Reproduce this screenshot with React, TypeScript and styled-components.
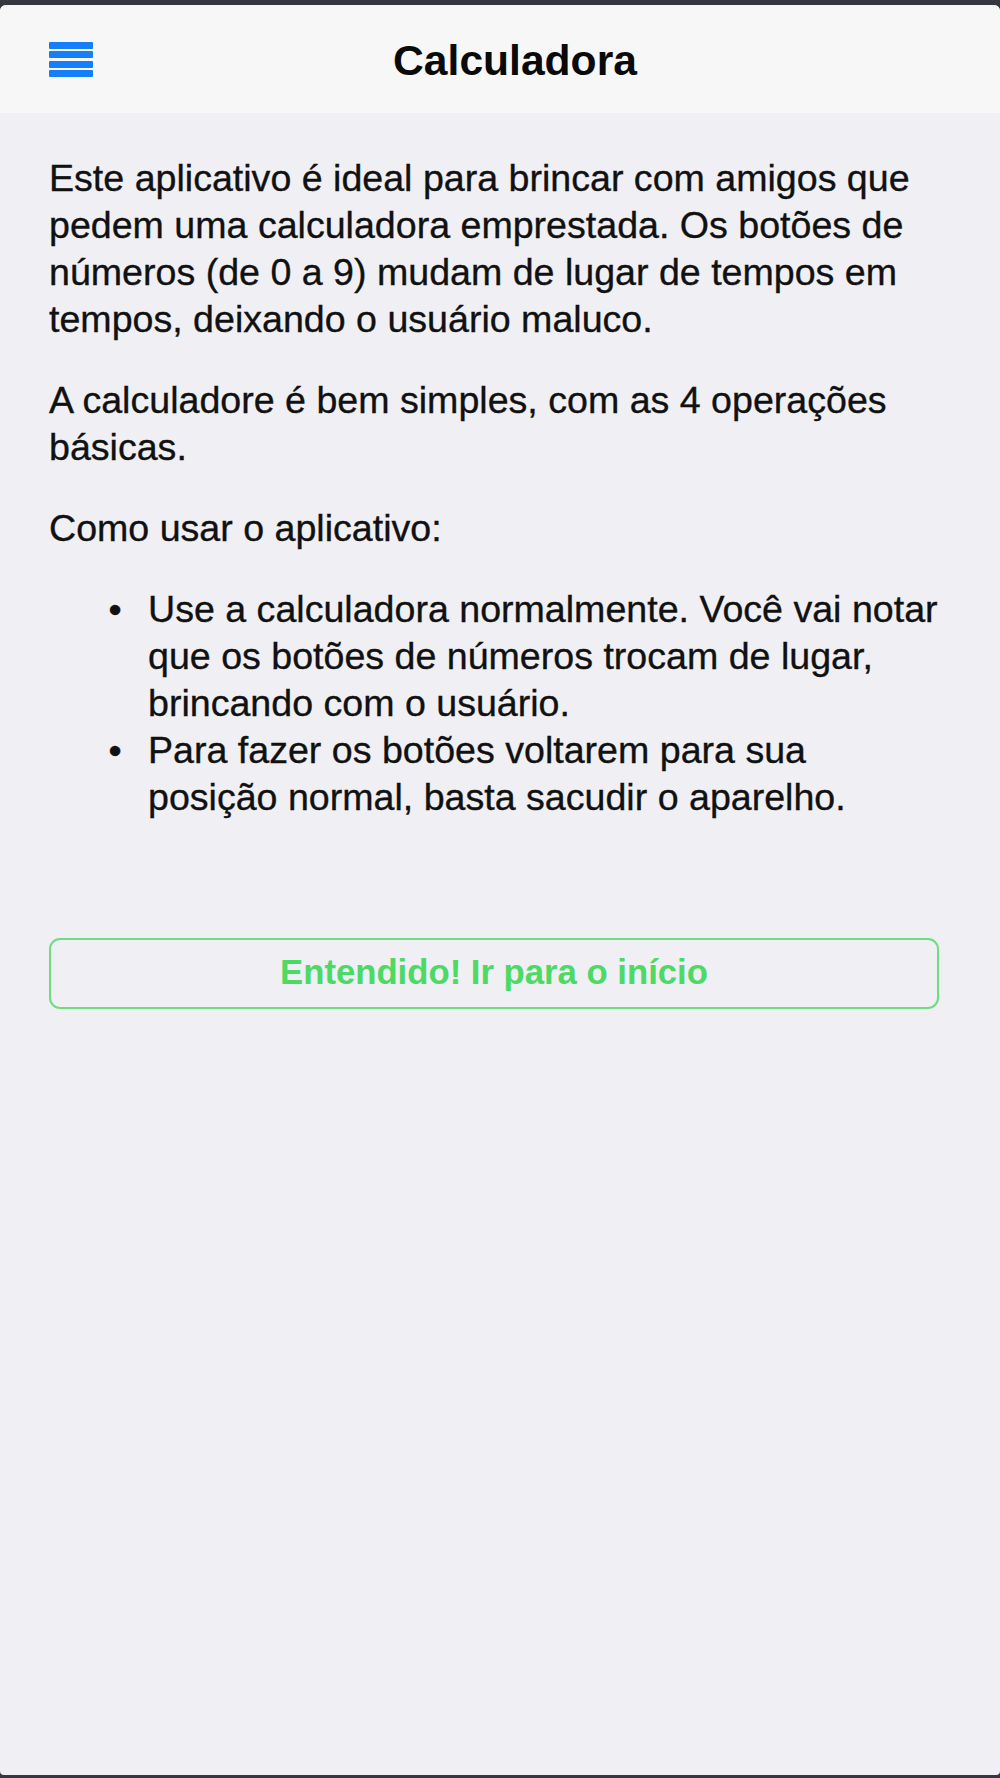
import React from "react";
import styled, { createGlobalStyle } from "styled-components";

const Global = createGlobalStyle`
  html, body { margin: 0; padding: 0; background: #33393e; }
  body { font-family: "Liberation Sans", Arial, sans-serif; }
  * { box-sizing: border-box; }
`;

const Frame = styled.div`
  width: 1000px;
  height: 1778px;
  padding: 5px 0 3px 0;
  background: #33393e;
`;

const Screen = styled.div`
  height: 100%;
  background: #efeff4;
  border-radius: 6px 6px 4px 4px;
  overflow: hidden;
  display: flex;
  flex-direction: column;
`;

const NavBar = styled.header`
  height: 108px;
  background: #f7f7f7;
  display: grid;
  grid-template-columns: 100px 1fr 70px;
  align-items: center;
`;

const MenuButton = styled.button`
  border: 0;
  background: none;
  padding: 0 0 0 49px;
  margin: 0;
  display: flex;
  flex-direction: column;
  gap: 2.3px;
  width: 94px;
  align-self: center;
  margin-top: 1px;
`;

const Bar = styled.span`
  display: block;
  height: 7px;
  width: 44px;
  background: #147efb;
  border-radius: 1px;
`;

const Title = styled.h1`
  margin: 0;
  text-align: center;
  font-size: 42.6px;
  font-weight: 700;
  color: #0a0a0a;
  padding-top: 2px;
`;

const Content = styled.main`
  padding: 42px 58px 0 49px;
  font-size: 37.6px;
  line-height: 47px;
  color: #111;
  -webkit-text-stroke: 0.35px #111;
`;

const Para = styled.p`
  margin: 0 0 34px 0;
`;

const List = styled.ul`
  margin: 0;
  padding-left: 99px;
  list-style: disc;
  li::marker { content: "\\2022\\2002\\2009"; }
`;

const Item = styled.li``;

const ActionButton = styled.button`
  margin-top: 117px;
  width: 890px;
  height: 71px;
  border: 2.5px solid #6fdd7e;
  border-radius: 11px;
  background: transparent;
  color: #4cd964;
  font-family: "Liberation Sans", Arial, sans-serif;
  font-size: 34.7px;
  font-weight: 700;
  display: flex;
  align-items: center;
  justify-content: center;
  padding: 0 0 2px 0;
  -webkit-text-stroke: 0;
`;

export default function App() {
  return (
    <>
      <Global />
      <Frame>
        <Screen>
          <NavBar>
            <MenuButton aria-label="menu">
              <Bar />
              <Bar />
              <Bar />
              <Bar />
            </MenuButton>
            <Title>Calculadora</Title>
            <span />
          </NavBar>
          <Content>
            <Para>
              Este aplicativo é ideal para brincar com amigos que pedem uma
              calculadora emprestada. Os botões de números (de 0 a 9) mudam de
              lugar de tempos em tempos, deixando o usuário maluco.
            </Para>
            <Para>A calculadore é bem simples, com as 4 operações básicas.</Para>
            <Para>Como usar o aplicativo:</Para>
            <List>
              <Item>
                Use a calculadora normalmente. Você vai notar que os botões de
                números trocam de lugar, brincando com o usuário.
              </Item>
              <Item>
                Para fazer os botões voltarem para sua posição normal, basta
                sacudir o aparelho.
              </Item>
            </List>
            <ActionButton>Entendido! Ir para o início</ActionButton>
          </Content>
        </Screen>
      </Frame>
    </>
  );
}
